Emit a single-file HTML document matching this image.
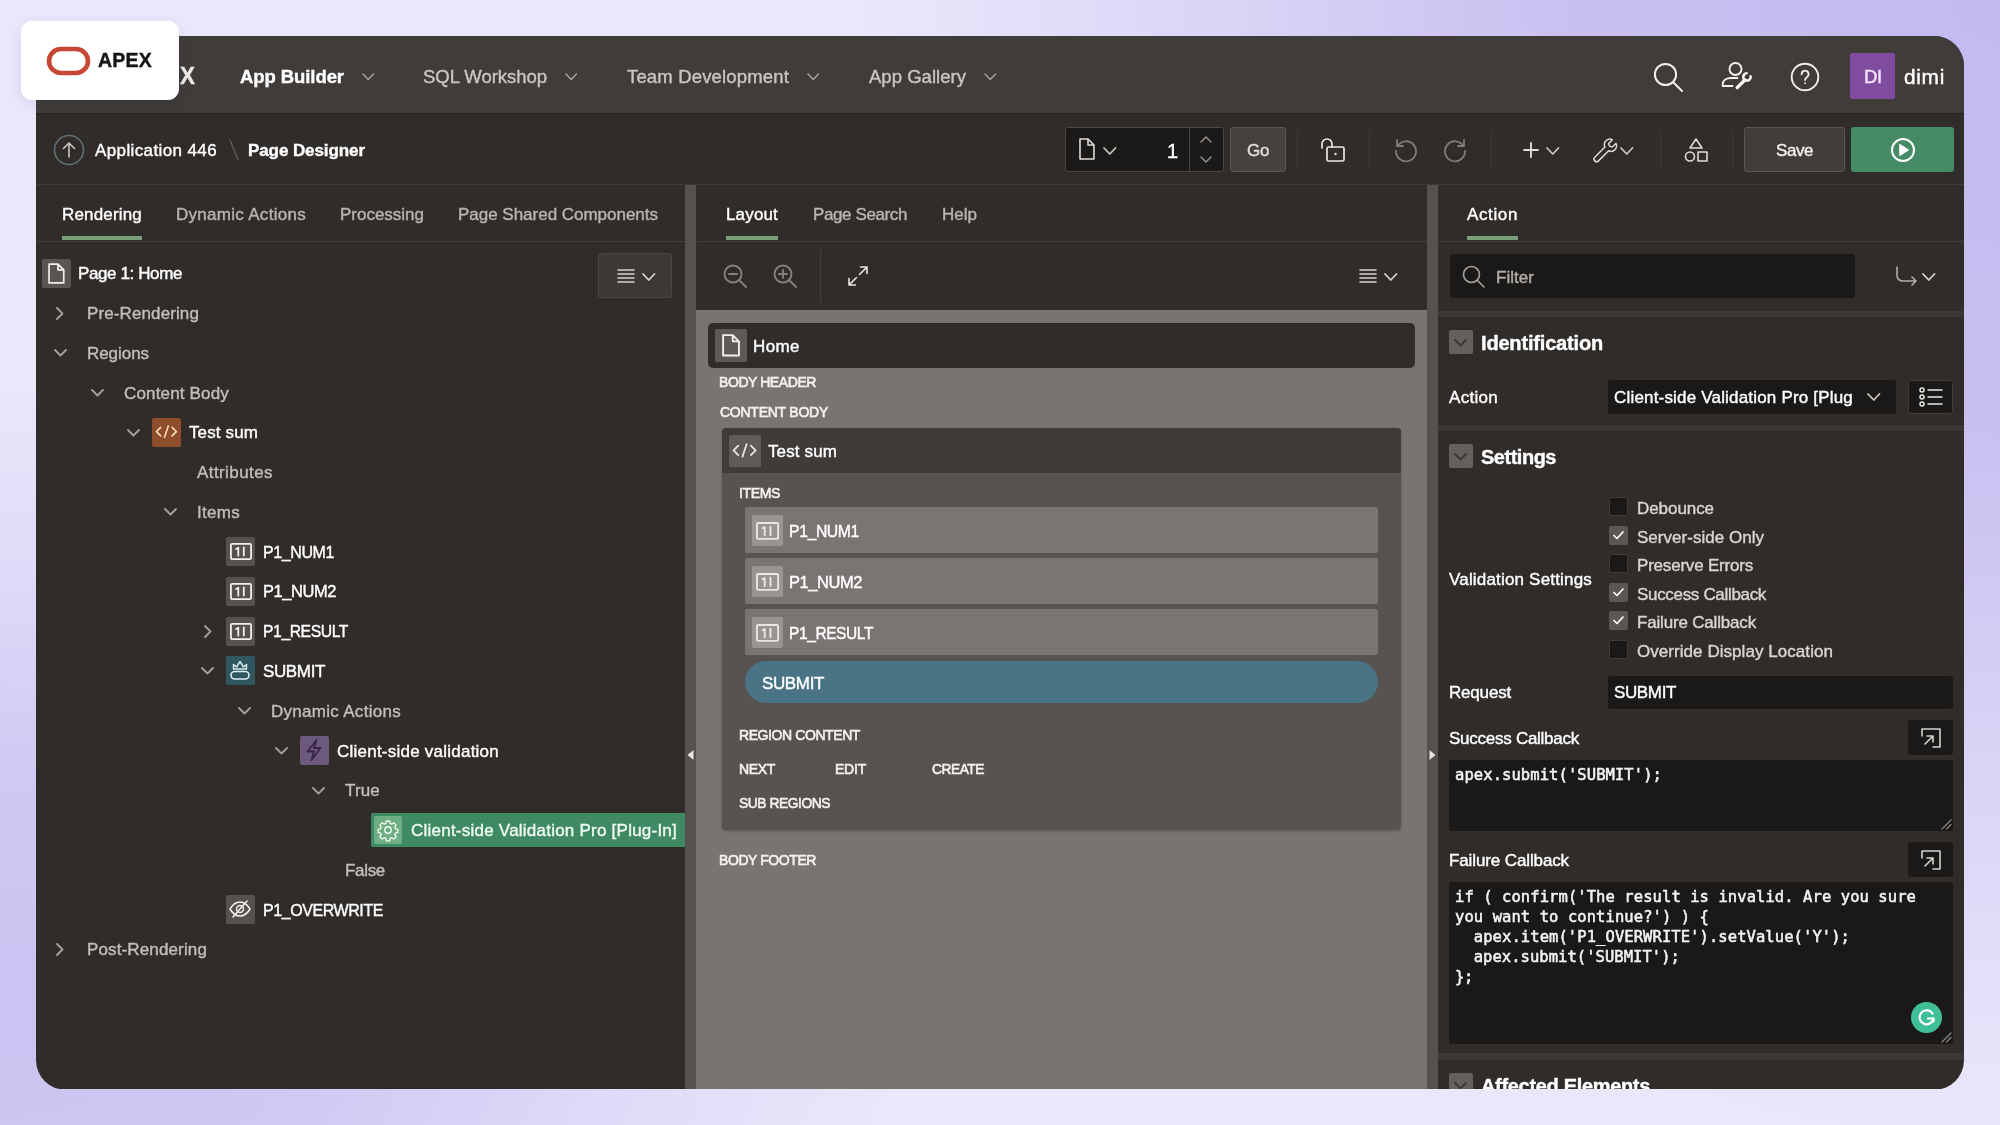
<!DOCTYPE html>
<html lang="en"><head><meta charset="utf-8"><title>APEX Page Designer</title>
<style>
html,body{margin:0;padding:0;}
body{width:2000px;height:1125px;overflow:hidden;background:#e9e5fa;}
#stage{position:relative;transform:translateZ(0);will-change:transform;font-family:"Liberation Sans",sans-serif;width:2000px;height:1125px;overflow:hidden;
 background:radial-gradient(ellipse 950px 650px at 0px 1000px,rgba(203,196,242,1) 0%,rgba(203,196,242,0.9) 30%,rgba(203,196,242,0.7) 45%,rgba(203,196,242,0.4) 63%,rgba(203,196,242,0) 95%),radial-gradient(circle 1150px at 2000px 0px,#c3baf0 0%,#c8bff0 36%,#d8d2f5 64%,#e7e3fa 92%,#eae7fb 100%);}
#stage div,#stage span,#stage svg{position:absolute;box-sizing:border-box;}
#stage span{white-space:pre;-webkit-text-stroke:0.4px currentColor;}
#stage svg{overflow:visible;fill:none;stroke-linecap:round;stroke-linejoin:round;}
#clip{left:0;top:0;width:2000px;height:1125px;clip-path:inset(36px 36px 36px 36px round 4px 24px 24px 24px);}

</style></head>
<body>
<div id="stage">
<div id="clip">
<div id="win" style="left:36px;top:36px;width:1928px;height:1054px;border-radius:4px 30px 30px 30px;overflow:hidden;background:#302c29;">
<div style="left:0px;top:0px;width:1928px;height:77px;background:#403c39;"></div>
<div style="left:0px;top:77px;width:1928px;height:1px;background:#262322;"></div>
<div style="left:0px;top:148px;width:1928px;height:1px;background:#3d3a38;"></div>
<div style="left:0px;top:205px;width:649px;height:1px;background:#403d3b;"></div>
<div style="left:661px;top:205px;width:730px;height:1px;background:#403d3b;"></div>
<div style="left:1402px;top:205px;width:526px;height:1px;background:#403d3b;"></div>
<div style="left:649px;top:149px;width:11.299999999999955px;height:905px;background:#56514d;"></div>
<div style="left:1391px;top:149px;width:11px;height:905px;background:#56514d;"></div>
<div style="left:660.3px;top:274px;width:730.7px;height:780px;background:#797470;"></div>
</div>
<svg style="left:362.75px;top:74.25px;" width="10.5" height="5.5" viewBox="0 0 10.5 5.5" stroke="#a29e9b" stroke-width="1.6"><path d="M0 0 L5.25 5.5 L10.5 0"/></svg>
<svg style="left:565.75px;top:74.25px;" width="10.5" height="5.5" viewBox="0 0 10.5 5.5" stroke="#a29e9b" stroke-width="1.6"><path d="M0 0 L5.25 5.5 L10.5 0"/></svg>
<svg style="left:807.75px;top:74.25px;" width="10.5" height="5.5" viewBox="0 0 10.5 5.5" stroke="#a29e9b" stroke-width="1.6"><path d="M0 0 L5.25 5.5 L10.5 0"/></svg>
<svg style="left:984.75px;top:74.25px;" width="10.5" height="5.5" viewBox="0 0 10.5 5.5" stroke="#a29e9b" stroke-width="1.6"><path d="M0 0 L5.25 5.5 L10.5 0"/></svg>
<svg style="left:1653px;top:62.5px;" width="32" height="32" viewBox="0 0 32 32" stroke="#f1efed" stroke-width="2"><circle cx="12.5" cy="11.5" r="10.6"/><path d="M20.2 19.2 L29 28"/></svg>
<svg style="left:1720px;top:61px;" width="32" height="32" viewBox="0 0 32 32" stroke="#f4f2f0" stroke-width="1.9"><circle cx="15.5" cy="8" r="6"/><path d="M2.7 25 v-1.5 c0-4.5 4.2-6.5 8.5-6.5 h6.3 M2.7 25 h9.8"/><path d="M17.2 26.6 L24.8 19" stroke-width="3.4"/><path d="M30.6 15.2 A3.7 3.7 0 1 1 26.6 12.2" stroke-width="2.6"/></svg>
<svg style="left:1789.5px;top:62px;" width="30" height="30" viewBox="0 0 30 30" stroke="#f1efed" stroke-width="1.9"><circle cx="15" cy="15" r="13.3"/><path d="M11.6 12.2 a3.5 3.5 0 1 1 5.3 3 c-1.3 0.9-1.8 1.4-1.8 2.9"/><circle cx="15.1" cy="21.2" r="0.9" fill="#f1efed" stroke="none"/></svg>
<div style="left:1850px;top:53px;width:45px;height:46px;background:#7f4c9f;border-radius:2px;"></div>
<svg style="left:53px;top:134px;" width="32" height="32" viewBox="0 0 32 32" stroke="#c9c6c3" stroke-width="1.6"><circle cx="16" cy="16" r="14.5" stroke="#5f6f72"/><path d="M16 23 V9 M10.5 14.5 L16 9 L21.5 14.5" stroke="#c9c6c3"/></svg>
<svg style="left:229px;top:139px;" width="10" height="22" viewBox="0 0 10 22" stroke="#5f5b59" stroke-width="1.4"><path d="M1 1 L9 21"/></svg>
<div style="left:1065px;top:127px;width:159px;height:45px;background:#1c1a19;border:1px solid #4a4644;border-radius:3px;"></div>
<div style="left:1189px;top:128px;width:1px;height:43px;background:#4a4644;"></div>
<svg style="left:1078px;top:138px;" width="18" height="22" viewBox="0 0 18 22" stroke="#dedbd8" stroke-width="1.6"><path d="M2 1 h8 l6 6 v14 h-14 z M10 1 v6 h6"/></svg>
<svg style="left:1104.25px;top:148.0px;" width="11.5" height="6" viewBox="0 0 11.5 6" stroke="#c9c5c1" stroke-width="1.8"><path d="M0 0 L5.75 6 L11.5 0"/></svg>
<svg style="left:1201px;top:137px;" width="10" height="5" viewBox="0 0 10 5" stroke="#8d8986" stroke-width="1.6"><path d="M0 5 L5 0 L10 5"/></svg>
<svg style="left:1201px;top:157px;" width="10" height="5" viewBox="0 0 10 5" stroke="#8d8986" stroke-width="1.6"><path d="M0 0 L5 5 L10 0"/></svg>
<div style="left:1230px;top:127px;width:56px;height:45px;background:#45413e;border:1px solid #5a5653;border-radius:3px;"></div>
<div style="left:1297px;top:129px;width:1px;height:42px;background:#3b3836;"></div>
<div style="left:1369px;top:129px;width:1px;height:42px;background:#3b3836;"></div>
<div style="left:1491px;top:129px;width:1px;height:42px;background:#3b3836;"></div>
<div style="left:1660px;top:129px;width:1px;height:42px;background:#3b3836;"></div>
<div style="left:1732px;top:129px;width:1px;height:42px;background:#3b3836;"></div>
<svg style="left:1319px;top:136px;" width="28" height="28" viewBox="0 0 28 28" stroke="#e8e6e3" stroke-width="1.7"><rect x="8" y="11" width="17" height="14" rx="1.5"/><path d="M3 12 V8 a5 5 0 0 1 10 0 v3"/><circle cx="16.5" cy="18" r="1.2" fill="#e8e6e3" stroke="none"/></svg>
<svg style="left:1392.5px;top:134.5px;" width="26" height="26" viewBox="0 0 26 26" stroke="#807c79" stroke-width="1.8"><path d="M4 5 v6 h6"/><path d="M4.5 11 A10 10 0 1 1 3 16"/></svg>
<svg style="left:1442px;top:134.5px;" width="26" height="26" viewBox="0 0 26 26" stroke="#807c79" stroke-width="1.8"><path d="M22 5 v6 h-6"/><path d="M21.5 11 A10 10 0 1 0 23 16"/></svg>
<svg style="left:1523.5px;top:143px;" width="14" height="14" viewBox="0 0 14 14" stroke="#dedbd8" stroke-width="1.9"><path d="M7 0 V14 M0 7 H14"/></svg>
<svg style="left:1547.25px;top:148.0px;" width="11.5" height="6" viewBox="0 0 11.5 6" stroke="#c9c5c1" stroke-width="1.8"><path d="M0 0 L5.75 6 L11.5 0"/></svg>
<svg style="left:1591px;top:134.5px;transform:scale(0.92);" width="26" height="26" viewBox="0 0 26 26" stroke="#dedbd8" stroke-width="1.6"><path d="M3 23 l11-11 a6 6 0 0 1 8-8 l-4 4 1 3 3 1 4-4 a6 6 0 0 1-8 8 l-11 11 a2.3 2.3 0 0 1-4-4 z"/></svg>
<svg style="left:1621.25px;top:148.0px;" width="11.5" height="6" viewBox="0 0 11.5 6" stroke="#c9c5c1" stroke-width="1.8"><path d="M0 0 L5.75 6 L11.5 0"/></svg>
<svg style="left:1683px;top:137px;" width="26" height="26" viewBox="0 0 26 26" stroke="#dedbd8" stroke-width="1.6"><path d="M13 2 L19 11 H7 Z"/><circle cx="7" cy="19.5" r="4.5"/><rect x="15" y="15" width="9" height="9"/></svg>
<div style="left:1744px;top:127px;width:101px;height:45px;background:#413d3b;border:1px solid #5a5653;border-radius:3px;"></div>
<div style="left:1851px;top:127px;width:103px;height:45px;background:#458b66;border-radius:3px;"></div>
<svg style="left:1890px;top:137px;" width="26" height="26" viewBox="0 0 26 26" stroke="#ffffff" stroke-width="2"><circle cx="13" cy="13" r="11"/><path d="M10 7.5 L18.5 13 L10 18.5 Z" fill="#fff" stroke-width="1"/></svg>
<div style="left:62px;top:235.8px;width:80px;height:4.699999999999989px;background:#789e7a;"></div>
<div style="left:726px;top:235.8px;width:52px;height:4.699999999999989px;background:#789e7a;"></div>
<div style="left:1467px;top:235.8px;width:51px;height:4.699999999999989px;background:#789e7a;"></div>
<div style="left:42px;top:258.5px;width:29px;height:29.0px;background:#595552;border-radius:2px;"></div>
<svg style="left:48.1px;top:262.5px;" width="16.8" height="21.0" viewBox="0 0 16 20" stroke="#f1efed" stroke-width="1.6"><path d="M1 1 h8.5 l5.5 5.5 v12.5 h-14 z M9.5 1 v5.5 h5.5"/></svg>
<div style="left:598px;top:253px;width:74px;height:45px;background:#3b3836;border:1px solid #4a4644;border-radius:3px;"></div>
<svg style="left:618px;top:269px;" width="16" height="14" viewBox="0 0 16 14" stroke="#d5d2cf" stroke-width="1.5"><path d="M0 1 H16 M0 5 H16 M0 9 H16 M0 13 H16"/></svg>
<svg style="left:643.25px;top:274.0px;" width="11.5" height="6" viewBox="0 0 11.5 6" stroke="#d5d2cf" stroke-width="1.8"><path d="M0 0 L5.75 6 L11.5 0"/></svg>
<svg style="left:57.25px;top:307.5px;" width="5.5" height="11" viewBox="0 0 5.5 11" stroke="#a39f9b" stroke-width="1.9"><path d="M0 0 L5.5 5.5 L0 11"/></svg>
<svg style="left:54.5px;top:350.25px;" width="11" height="5.5" viewBox="0 0 11 5.5" stroke="#a39f9b" stroke-width="1.9"><path d="M0 0 L5.5 5.5 L11 0"/></svg>
<svg style="left:91.5px;top:390.25px;" width="11" height="5.5" viewBox="0 0 11 5.5" stroke="#a39f9b" stroke-width="1.9"><path d="M0 0 L5.5 5.5 L11 0"/></svg>
<svg style="left:127.5px;top:430.25px;" width="11" height="5.5" viewBox="0 0 11 5.5" stroke="#a39f9b" stroke-width="1.9"><path d="M0 0 L5.5 5.5 L11 0"/></svg>
<div style="left:152px;top:417.5px;width:29px;height:29.0px;background:#8e4d2b;border-radius:2px;"></div>
<svg style="left:155.1px;top:425.35px;" width="22.799999999999997" height="13.299999999999999" viewBox="0 0 24 14" stroke="#ffd9bf" stroke-width="1.7"><path d="M6 2.5 L1.5 7 L6 11.5 M18 2.5 L22.5 7 L18 11.5 M14 1 L10 13"/></svg>
<svg style="left:164.5px;top:509.25px;" width="11" height="5.5" viewBox="0 0 11 5.5" stroke="#a39f9b" stroke-width="1.9"><path d="M0 0 L5.5 5.5 L11 0"/></svg>
<div style="left:226px;top:536.5px;width:29px;height:29.0px;background:#55514e;border-radius:2px;"></div>
<svg style="left:229.5px;top:542.5px;" width="22.0" height="17.0" viewBox="0 0 22 17" stroke="#f1efed" stroke-width="1.8"><rect x="0.9" y="0.9" width="20.2" height="15.2" rx="1.3"/><path d="M6.3 6 l2-1.3 v8 M13.8 4.5 v8" stroke-width="1.8"/></svg>
<div style="left:226px;top:576.5px;width:29px;height:29.0px;background:#55514e;border-radius:2px;"></div>
<svg style="left:229.5px;top:582.5px;" width="22.0" height="17.0" viewBox="0 0 22 17" stroke="#f1efed" stroke-width="1.8"><rect x="0.9" y="0.9" width="20.2" height="15.2" rx="1.3"/><path d="M6.3 6 l2-1.3 v8 M13.8 4.5 v8" stroke-width="1.8"/></svg>
<svg style="left:205.25px;top:625.5px;" width="5.5" height="11" viewBox="0 0 5.5 11" stroke="#a39f9b" stroke-width="1.9"><path d="M0 0 L5.5 5.5 L0 11"/></svg>
<div style="left:226px;top:616.5px;width:29px;height:29.0px;background:#55514e;border-radius:2px;"></div>
<svg style="left:229.5px;top:622.5px;" width="22.0" height="17.0" viewBox="0 0 22 17" stroke="#f1efed" stroke-width="1.8"><rect x="0.9" y="0.9" width="20.2" height="15.2" rx="1.3"/><path d="M6.3 6 l2-1.3 v8 M13.8 4.5 v8" stroke-width="1.8"/></svg>
<svg style="left:201.5px;top:668.25px;" width="11" height="5.5" viewBox="0 0 11 5.5" stroke="#a39f9b" stroke-width="1.9"><path d="M0 0 L5.5 5.5 L11 0"/></svg>
<div style="left:226px;top:655.5px;width:29px;height:29.0px;background:#30565f;border-radius:2px;"></div>
<svg style="left:230px;top:659px;" width="20" height="22" viewBox="0 0 20 22" stroke="#d9eef3" stroke-width="1.6"><rect x="1" y="12.5" width="18" height="7.5" rx="3.75"/><path d="M3.5 10 V5.5 l3 2.5 l3.5-5.5 l3.5 5.5 l3-2.5 V10 Z" stroke-width="1.4"/></svg>
<svg style="left:238.5px;top:708.25px;" width="11" height="5.5" viewBox="0 0 11 5.5" stroke="#a39f9b" stroke-width="1.9"><path d="M0 0 L5.5 5.5 L11 0"/></svg>
<svg style="left:275.5px;top:748.25px;" width="11" height="5.5" viewBox="0 0 11 5.5" stroke="#a39f9b" stroke-width="1.9"><path d="M0 0 L5.5 5.5 L11 0"/></svg>
<div style="left:300px;top:735.5px;width:29px;height:29.0px;background:#6c5a7d;border-radius:2px;"></div>
<svg style="left:306px;top:739px;" width="16" height="22" viewBox="0 0 16 22" stroke="#3a264d" stroke-width="1.9"><path d="M10.5 1 L1.5 12.5 H8 L5.5 21 L14.5 9 H8 Z"/></svg>
<svg style="left:312.5px;top:788.25px;" width="11" height="5.5" viewBox="0 0 11 5.5" stroke="#a39f9b" stroke-width="1.9"><path d="M0 0 L5.5 5.5 L11 0"/></svg>
<div style="left:371px;top:813px;width:314px;height:34px;background:#3f8a62;border-radius:2px 0 0 2px;"></div>
<div style="left:374px;top:816px;width:28px;height:28px;background:#6fae83;border-radius:2px;"></div>
<svg style="left:378px;top:820px;" width="20" height="20" viewBox="0 0 20 20" stroke="#f3fbf5" stroke-width="1.4"><circle cx="10" cy="10" r="3.2"/><path d="M8.4 1 h3.2 l.5 2.4 l1.7 .7 l2-1.3 l2.3 2.3 l-1.3 2 l.7 1.7 l2.4 .5 v3.2 l-2.4 .5 l-.7 1.7 l1.3 2 l-2.3 2.3 l-2-1.3 l-1.7 .7 l-.5 2.4 h-3.2 l-.5-2.4 l-1.7-.7 l-2 1.3 l-2.3-2.3 l1.3-2 l-.7-1.7 l-2.4-.5 v-3.2 l2.4-.5 l.7-1.7 l-1.3-2 l2.3-2.3 l2 1.3 l1.7-.7 z" stroke-width="1.3"/></svg>
<div style="left:226px;top:894.5px;width:29px;height:29.0px;background:#55514e;border-radius:2px;"></div>
<svg style="left:229px;top:900px;" width="22" height="18" viewBox="0 0 22 18" stroke="#f1efed" stroke-width="1.5"><path d="M1 9 C4 4 8 2 11 2 C14 2 18 4 21 9 C18 14 14 16 11 16 C8 16 4 14 1 9 Z"/><circle cx="11" cy="9" r="3.4"/><path d="M4 17 L18 1"/></svg>
<svg style="left:57.25px;top:943.5px;" width="5.5" height="11" viewBox="0 0 5.5 11" stroke="#a39f9b" stroke-width="1.9"><path d="M0 0 L5.5 5.5 L0 11"/></svg>
<svg style="left:687px;top:750px" width="7" height="10" viewBox="0 0 7 10"><path d="M6.5 0 L0.5 5 L6.5 10 Z" fill="#e5e2df"/></svg>
<svg style="left:1429px;top:750px" width="7" height="10" viewBox="0 0 7 10"><path d="M0.5 0 L6.5 5 L0.5 10 Z" fill="#e5e2df"/></svg>
<svg style="left:723px;top:264px;" width="24" height="24" viewBox="0 0 24 24" stroke="#85817d" stroke-width="1.9"><circle cx="10" cy="10" r="8.5"/><path d="M16.2 16.2 L23 23"/><path d="M6 10 H14"/></svg>
<svg style="left:773px;top:264px;" width="24" height="24" viewBox="0 0 24 24" stroke="#85817d" stroke-width="1.9"><circle cx="10" cy="10" r="8.5"/><path d="M16.2 16.2 L23 23"/><path d="M6 10 H14"/><path d="M10 6 V14"/></svg>
<div style="left:820px;top:249px;width:1px;height:54px;background:#3f3c3a;"></div>
<svg style="left:848px;top:266px;" width="20" height="20" viewBox="0 0 20 20" stroke="#e8e6e3" stroke-width="1.6"><path d="M12.5 1 H19 V7.5 M19 1 L11.5 8.5 M7.5 19 H1 V12.5 M1 19 L8.5 11.5"/></svg>
<svg style="left:1360px;top:269px;" width="16" height="14" viewBox="0 0 16 14" stroke="#d5d2cf" stroke-width="1.5"><path d="M0 1 H16 M0 5 H16 M0 9 H16 M0 13 H16"/></svg>
<svg style="left:1385.25px;top:274.0px;" width="11.5" height="6" viewBox="0 0 11.5 6" stroke="#d5d2cf" stroke-width="1.8"><path d="M0 0 L5.75 6 L11.5 0"/></svg>
<div style="left:708px;top:323px;width:707px;height:45px;background:#2f2c2a;border-radius:5px;"></div>
<div style="left:714.5px;top:329.05px;width:32.5px;height:32.5px;background:#5e5a57;border-radius:2px;"></div>
<svg style="left:721.71px;top:334.0px;" width="18.08" height="22.599999999999998" viewBox="0 0 16 20" stroke="#f1efed" stroke-width="1.7"><path d="M1 1 h8.5 l5.5 5.5 v12.5 h-14 z M9.5 1 v5.5 h5.5"/></svg>
<div style="left:722px;top:428px;width:679px;height:402px;background:#575350;border-radius:4px;box-shadow:0 1px 3px rgba(0,0,0,0.25);"></div>
<div style="left:722px;top:428px;width:679px;height:45px;background:#3f3b38;border-radius:4px 4px 0 0;"></div>
<div style="left:729px;top:434.7px;width:32px;height:32.0px;background:#5f5b58;border-radius:2px;"></div>
<svg style="left:732.4px;top:443.34999999999997px;" width="25.200000000000003" height="14.700000000000001" viewBox="0 0 24 14" stroke="#e8e6e3" stroke-width="1.7"><path d="M6 2.5 L1.5 7 L6 11.5 M18 2.5 L22.5 7 L18 11.5 M14 1 L10 13"/></svg>
<div style="left:745px;top:507px;width:633px;height:46px;background:#7a7572;border-radius:2px;"></div>
<div style="left:751.6px;top:514.8000000000001px;width:31.600000000000023px;height:31.59999999999991px;background:#99948f;border-radius:2px;"></div>
<svg style="left:755.85px;top:521.6750000000001px;" width="23.1" height="17.85" viewBox="0 0 22 17" stroke="#e9e6e3" stroke-width="1.8"><rect x="0.9" y="0.9" width="20.2" height="15.2" rx="1.3"/><path d="M6.3 6 l2-1.3 v8 M13.8 4.5 v8" stroke-width="1.8"/></svg>
<div style="left:745px;top:558px;width:633px;height:46px;background:#7a7572;border-radius:2px;"></div>
<div style="left:751.6px;top:565.8000000000001px;width:31.600000000000023px;height:31.59999999999991px;background:#99948f;border-radius:2px;"></div>
<svg style="left:755.85px;top:572.6750000000001px;" width="23.1" height="17.85" viewBox="0 0 22 17" stroke="#e9e6e3" stroke-width="1.8"><rect x="0.9" y="0.9" width="20.2" height="15.2" rx="1.3"/><path d="M6.3 6 l2-1.3 v8 M13.8 4.5 v8" stroke-width="1.8"/></svg>
<div style="left:745px;top:609px;width:633px;height:46px;background:#7a7572;border-radius:2px;"></div>
<div style="left:751.6px;top:616.8000000000001px;width:31.600000000000023px;height:31.59999999999991px;background:#99948f;border-radius:2px;"></div>
<svg style="left:755.85px;top:623.6750000000001px;" width="23.1" height="17.85" viewBox="0 0 22 17" stroke="#e9e6e3" stroke-width="1.8"><rect x="0.9" y="0.9" width="20.2" height="15.2" rx="1.3"/><path d="M6.3 6 l2-1.3 v8 M13.8 4.5 v8" stroke-width="1.8"/></svg>
<div style="left:745px;top:661px;width:633px;height:42px;background:#4a7486;border-radius:21px;"></div>
<div style="left:1450px;top:254px;width:405px;height:44px;background:#1b1918;border-radius:3px;"></div>
<svg style="left:1462px;top:265px;" width="24" height="24" viewBox="0 0 24 24" stroke="#a7a39f" stroke-width="1.6"><circle cx="9.5" cy="9.5" r="8"/><path d="M15.5 15.5 L22 22"/></svg>
<svg style="left:1896px;top:266px;" width="22" height="21" viewBox="0 0 22 21" stroke="#b3afab" stroke-width="1.6"><path d="M1 1 V9.5 a5.5 5.5 0 0 0 5.5 5.5 H20 M16 11 L20 15 L16 19"/></svg>
<svg style="left:1923.25px;top:274.0px;" width="11.5" height="6" viewBox="0 0 11.5 6" stroke="#d5d2cf" stroke-width="1.8"><path d="M0 0 L5.75 6 L11.5 0"/></svg>
<div style="left:1438px;top:311px;width:526px;height:6px;background:#3a3735;"></div>
<div style="left:1438px;top:425px;width:526px;height:6px;background:#3a3735;"></div>
<div style="left:1438px;top:1053px;width:526px;height:7px;background:#3a3735;"></div>
<div style="left:1449px;top:330.4px;width:23.5px;height:23.600000000000023px;background:#64605c;border-radius:2px;"></div>
<svg style="left:1455.2px;top:340.45px;" width="11" height="5.5" viewBox="0 0 11 5.5" stroke="#3b3734" stroke-width="1.8"><path d="M0 0 L5.5 5.5 L11 0"/></svg>
<div style="left:1608px;top:380px;width:288px;height:34px;background:#1b1918;border-radius:3px;"></div>
<svg style="left:1868.25px;top:394.0px;" width="11.5" height="6" viewBox="0 0 11.5 6" stroke="#c9c5c1" stroke-width="1.8"><path d="M0 0 L5.75 6 L11.5 0"/></svg>
<div style="left:1908px;top:380px;width:45px;height:34px;background:#1b1918;border:1px solid #3e3b39;border-radius:3px;"></div>
<svg style="left:1919px;top:387px;" width="24" height="20" viewBox="0 0 24 20" stroke="#e8e6e3" stroke-width="1.5"><circle cx="3" cy="3" r="2"/><circle cx="3" cy="10" r="2"/><circle cx="3" cy="17" r="2"/><path d="M9 3 H23 M9 10 H23 M9 17 H23"/></svg>
<div style="left:1449px;top:444.4px;width:23.5px;height:23.600000000000023px;background:#64605c;border-radius:2px;"></div>
<svg style="left:1455.2px;top:454.45px;" width="11" height="5.5" viewBox="0 0 11 5.5" stroke="#3b3734" stroke-width="1.8"><path d="M0 0 L5.5 5.5 L11 0"/></svg>
<div style="left:1609px;top:497px;width:19px;height:19px;background:#1b1918;border:1px solid #3e3b39;border-radius:2px;"></div>
<div style="left:1609px;top:526px;width:19px;height:19px;background:#5b5754;border-radius:2px;"></div>
<svg style="left:1613px;top:531px;" width="11" height="9" viewBox="0 0 11 9" stroke="#ffffff" stroke-width="1.7"><path d="M1 4.5 L4 7.5 L10 1"/></svg>
<div style="left:1609px;top:554px;width:19px;height:19px;background:#1b1918;border:1px solid #3e3b39;border-radius:2px;"></div>
<div style="left:1609px;top:583px;width:19px;height:19px;background:#5b5754;border-radius:2px;"></div>
<svg style="left:1613px;top:588px;" width="11" height="9" viewBox="0 0 11 9" stroke="#ffffff" stroke-width="1.7"><path d="M1 4.5 L4 7.5 L10 1"/></svg>
<div style="left:1609px;top:611px;width:19px;height:19px;background:#5b5754;border-radius:2px;"></div>
<svg style="left:1613px;top:616px;" width="11" height="9" viewBox="0 0 11 9" stroke="#ffffff" stroke-width="1.7"><path d="M1 4.5 L4 7.5 L10 1"/></svg>
<div style="left:1609px;top:640px;width:19px;height:19px;background:#1b1918;border:1px solid #3e3b39;border-radius:2px;"></div>
<div style="left:1608px;top:676px;width:345px;height:33px;background:#1b1918;border-radius:3px;"></div>
<div style="left:1908px;top:720px;width:45px;height:35px;background:#1b1918;border-radius:3px;"></div>
<svg style="left:1921px;top:728px;" width="20" height="20" viewBox="0 0 20 20" stroke="#d5d2cf" stroke-width="1.6"><path d="M1 8 V1 H19 V19 H12"/><path d="M4 16 L12 8 M6 8 H12 V14" /></svg>
<div style="left:1449px;top:760px;width:504px;height:71px;background:#1b1918;border-radius:3px;"></div>
<div style="left:1908px;top:842px;width:45px;height:35px;background:#1b1918;border-radius:3px;"></div>
<svg style="left:1921px;top:850px;" width="20" height="20" viewBox="0 0 20 20" stroke="#d5d2cf" stroke-width="1.6"><path d="M1 8 V1 H19 V19 H12"/><path d="M4 16 L12 8 M6 8 H12 V14" /></svg>
<div style="left:1449px;top:882px;width:504px;height:162px;background:#1b1918;border-radius:3px;"></div>
<svg style="left:1941px;top:819px;" width="10" height="10" viewBox="0 0 10 10" stroke="#8a8683" stroke-width="1.2"><path d="M1 10 L10 1 M5.5 10 L10 5.5"/></svg>
<svg style="left:1941px;top:1032px;" width="10" height="10" viewBox="0 0 10 10" stroke="#8a8683" stroke-width="1.2"><path d="M1 10 L10 1 M5.5 10 L10 5.5"/></svg>
<div style="left:1911px;top:1002px;width:31px;height:31px;border-radius:50%;background:#3fbf98;"></div>
<svg style="left:1917px;top:1008px;" width="18.5" height="19" viewBox="0 0 18.5 19" stroke="#ffffff" stroke-width="2.2"><path d="M15.5 5.5 A7 7 0 1 0 16.5 10.5 H11"/><path d="M16.5 10.5 V13.5" /></svg>
<div style="left:1449px;top:1073.4px;width:23.5px;height:23.59999999999991px;background:#64605c;border-radius:2px;"></div>
<svg style="left:1455.2px;top:1083.45px;" width="11" height="5.5" viewBox="0 0 11 5.5" stroke="#3b3734" stroke-width="1.8"><path d="M0 0 L5.5 5.5 L11 0"/></svg>
<span style="left:180px;top:62.7px;font-size:23px;line-height:27.6px;font-weight:700;color:#ebe9e6;letter-spacing:-0.450px;transform:scaleX(0.9736);transform-origin:0 50%;">X</span>
<span style="left:240px;top:66.1px;font-size:18.5px;line-height:22.2px;font-weight:700;color:#ffffff;letter-spacing:-0.077px;">App Builder</span>
<span style="left:423px;top:66.1px;font-size:18.5px;line-height:22.2px;font-weight:400;color:#c9c5c1;letter-spacing:-0.035px;">SQL Workshop</span>
<span style="left:627px;top:66.1px;font-size:18.5px;line-height:22.2px;font-weight:400;color:#c9c5c1;letter-spacing:0.163px;">Team Development</span>
<span style="left:869px;top:66.1px;font-size:18.5px;line-height:22.2px;font-weight:400;color:#c9c5c1;letter-spacing:0.031px;">App Gallery</span>
<span style="left:1864px;top:66.1px;font-size:18.5px;line-height:22.2px;font-weight:400;color:#f6e6fb;letter-spacing:-0.250px;">DI</span>
<span style="left:1904px;top:65.3px;font-size:20px;line-height:24.0px;font-weight:400;color:#ffffff;letter-spacing:0.700px;transform:scaleX(1.0387);transform-origin:0 50%;">dimi</span>
<span style="left:95px;top:140.9px;font-size:17px;line-height:20.4px;font-weight:400;color:#ffffff;letter-spacing:0.382px;">Application 446</span>
<span style="left:248px;top:140.9px;font-size:17px;line-height:20.4px;font-weight:700;color:#ffffff;letter-spacing:-0.085px;">Page Designer</span>
<span style="left:1167px;top:139.3px;font-size:20px;line-height:24.0px;font-weight:400;color:#ffffff;letter-spacing:-0.125px;">1</span>
<span style="left:1247px;top:140.9px;font-size:17px;line-height:20.4px;font-weight:400;color:#e2dfdc;letter-spacing:-0.344px;">Go</span>
<span style="left:1776px;top:140.9px;font-size:17px;line-height:20.4px;font-weight:400;color:#f1efed;letter-spacing:-0.438px;">Save</span>
<span style="left:62px;top:204.9px;font-size:17px;line-height:20.4px;font-weight:400;color:#ffffff;letter-spacing:0.172px;">Rendering</span>
<span style="left:176px;top:204.9px;font-size:17px;line-height:20.4px;font-weight:400;color:#b8b4b0;letter-spacing:0.289px;">Dynamic Actions</span>
<span style="left:340px;top:204.9px;font-size:17px;line-height:20.4px;font-weight:400;color:#b8b4b0;letter-spacing:-0.011px;">Processing</span>
<span style="left:458px;top:204.9px;font-size:17px;line-height:20.4px;font-weight:400;color:#b8b4b0;letter-spacing:-0.016px;">Page Shared Components</span>
<span style="left:726px;top:204.9px;font-size:17px;line-height:20.4px;font-weight:400;color:#ffffff;letter-spacing:0.159px;">Layout</span>
<span style="left:813px;top:204.9px;font-size:17px;line-height:20.4px;font-weight:400;color:#b8b4b0;letter-spacing:-0.391px;">Page Search</span>
<span style="left:942px;top:204.9px;font-size:17px;line-height:20.4px;font-weight:400;color:#b8b4b0;letter-spacing:0.008px;">Help</span>
<span style="left:1467px;top:204.9px;font-size:17px;line-height:20.4px;font-weight:400;color:#ffffff;letter-spacing:0.625px;">Action</span>
<span style="left:78px;top:263.9px;font-size:17px;line-height:20.4px;font-weight:400;color:#ffffff;letter-spacing:-0.391px;">Page 1: Home</span>
<span style="left:87px;top:303.9px;font-size:17px;line-height:20.4px;font-weight:400;color:#c2beba;letter-spacing:0.111px;">Pre-Rendering</span>
<span style="left:87px;top:343.9px;font-size:17px;line-height:20.4px;font-weight:400;color:#c2beba;letter-spacing:-0.054px;">Regions</span>
<span style="left:124px;top:383.9px;font-size:17px;line-height:20.4px;font-weight:400;color:#c2beba;letter-spacing:0.165px;">Content Body</span>
<span style="left:189px;top:422.9px;font-size:17px;line-height:20.4px;font-weight:400;color:#ffffff;letter-spacing:0.121px;">Test sum</span>
<span style="left:197px;top:462.9px;font-size:17px;line-height:20.4px;font-weight:400;color:#c2beba;letter-spacing:0.419px;">Attributes</span>
<span style="left:197px;top:502.9px;font-size:17px;line-height:20.4px;font-weight:400;color:#c2beba;letter-spacing:0.287px;">Items</span>
<span style="left:263px;top:542.9px;font-size:17px;line-height:20.4px;font-weight:400;color:#ffffff;letter-spacing:-0.450px;transform:scaleX(0.9432);transform-origin:0 50%;">P1_NUM1</span>
<span style="left:263px;top:581.9px;font-size:17px;line-height:20.4px;font-weight:400;color:#ffffff;letter-spacing:-0.450px;transform:scaleX(0.9698);transform-origin:0 50%;">P1_NUM2</span>
<span style="left:263px;top:621.9px;font-size:17px;line-height:20.4px;font-weight:400;color:#ffffff;letter-spacing:-0.450px;transform:scaleX(0.9238);transform-origin:0 50%;">P1_RESULT</span>
<span style="left:263px;top:661.9px;font-size:17px;line-height:20.4px;font-weight:400;color:#ffffff;letter-spacing:-0.372px;">SUBMIT</span>
<span style="left:271px;top:701.9px;font-size:17px;line-height:20.4px;font-weight:400;color:#c2beba;letter-spacing:0.289px;">Dynamic Actions</span>
<span style="left:337px;top:741.9px;font-size:17px;line-height:20.4px;font-weight:400;color:#ffffff;letter-spacing:0.233px;">Client-side validation</span>
<span style="left:345px;top:780.9px;font-size:17px;line-height:20.4px;font-weight:400;color:#c2beba;letter-spacing:0.168px;">True</span>
<span style="left:411px;top:820.9px;font-size:17px;line-height:20.4px;font-weight:400;color:#effbf2;letter-spacing:0.232px;">Client-side Validation Pro [Plug-In]</span>
<span style="left:345px;top:860.9px;font-size:17px;line-height:20.4px;font-weight:400;color:#c2beba;letter-spacing:-0.316px;">False</span>
<span style="left:263px;top:900.9px;font-size:17px;line-height:20.4px;font-weight:400;color:#ffffff;letter-spacing:-0.450px;transform:scaleX(0.9412);transform-origin:0 50%;">P1_OVERWRITE</span>
<span style="left:87px;top:939.9px;font-size:17px;line-height:20.4px;font-weight:400;color:#c2beba;letter-spacing:0.134px;">Post-Rendering</span>
<span style="left:753px;top:336.9px;font-size:17px;line-height:20.4px;font-weight:400;color:#ffffff;letter-spacing:0.410px;">Home</span>
<span style="left:719px;top:373.5px;font-size:14px;line-height:16.8px;font-weight:400;color:#f3f1ef;letter-spacing:-0.425px;-webkit-text-stroke:0.6px currentColor;">BODY HEADER</span>
<span style="left:720px;top:403.5px;font-size:14px;line-height:16.8px;font-weight:400;color:#f3f1ef;letter-spacing:-0.249px;-webkit-text-stroke:0.6px currentColor;">CONTENT BODY</span>
<span style="left:768px;top:441.9px;font-size:17px;line-height:20.4px;font-weight:400;color:#ffffff;letter-spacing:0.121px;">Test sum</span>
<span style="left:739px;top:484.5px;font-size:14px;line-height:16.8px;font-weight:400;color:#f3f1ef;letter-spacing:-0.356px;-webkit-text-stroke:0.6px currentColor;">ITEMS</span>
<span style="left:789px;top:521.9px;font-size:17px;line-height:20.4px;font-weight:400;color:#ffffff;letter-spacing:-0.450px;transform:scaleX(0.9300);transform-origin:0 50%;">P1_NUM1</span>
<span style="left:789px;top:572.9px;font-size:17px;line-height:20.4px;font-weight:400;color:#ffffff;letter-spacing:-0.450px;transform:scaleX(0.9698);transform-origin:0 50%;">P1_NUM2</span>
<span style="left:789px;top:623.9px;font-size:17px;line-height:20.4px;font-weight:400;color:#ffffff;letter-spacing:-0.450px;transform:scaleX(0.9129);transform-origin:0 50%;">P1_RESULT</span>
<span style="left:762px;top:673.9px;font-size:17px;line-height:20.4px;font-weight:400;color:#ffffff;letter-spacing:-0.372px;">SUBMIT</span>
<span style="left:739px;top:726.5px;font-size:14px;line-height:16.8px;font-weight:400;color:#f3f1ef;letter-spacing:-0.413px;-webkit-text-stroke:0.6px currentColor;">REGION CONTENT</span>
<span style="left:739px;top:760.5px;font-size:14px;line-height:16.8px;font-weight:400;color:#f3f1ef;letter-spacing:-0.336px;-webkit-text-stroke:0.6px currentColor;">NEXT</span>
<span style="left:835px;top:760.5px;font-size:14px;line-height:16.8px;font-weight:400;color:#f3f1ef;letter-spacing:-0.223px;-webkit-text-stroke:0.6px currentColor;">EDIT</span>
<span style="left:932px;top:760.5px;font-size:14px;line-height:16.8px;font-weight:400;color:#f3f1ef;letter-spacing:-0.450px;transform:scaleX(0.9802);transform-origin:0 50%;-webkit-text-stroke:0.6px currentColor;">CREATE</span>
<span style="left:739px;top:794.5px;font-size:14px;line-height:16.8px;font-weight:400;color:#f3f1ef;letter-spacing:-0.450px;transform:scaleX(0.9859);transform-origin:0 50%;-webkit-text-stroke:0.6px currentColor;">SUB REGIONS</span>
<span style="left:719px;top:851.5px;font-size:14px;line-height:16.8px;font-weight:400;color:#f3f1ef;letter-spacing:-0.423px;-webkit-text-stroke:0.6px currentColor;">BODY FOOTER</span>
<span style="left:1496px;top:267.9px;font-size:17px;line-height:20.4px;font-weight:400;color:#b3afab;letter-spacing:0.036px;">Filter</span>
<span style="left:1481px;top:331.3px;font-size:20px;line-height:24.0px;font-weight:700;color:#ffffff;letter-spacing:-0.175px;">Identification</span>
<span style="left:1449px;top:387.9px;font-size:17px;line-height:20.4px;font-weight:400;color:#ffffff;letter-spacing:0.292px;">Action</span>
<span style="left:1614px;top:387.9px;font-size:17px;line-height:20.4px;font-weight:400;color:#ffffff;letter-spacing:0.185px;">Client-side Validation Pro [Plug</span>
<span style="left:1481px;top:445.3px;font-size:20px;line-height:24.0px;font-weight:700;color:#ffffff;letter-spacing:-0.450px;transform:scaleX(0.9959);transform-origin:0 50%;">Settings</span>
<span style="left:1449px;top:569.9px;font-size:17px;line-height:20.4px;font-weight:400;color:#ffffff;letter-spacing:0.181px;">Validation Settings</span>
<span style="left:1637px;top:498.9px;font-size:17px;line-height:20.4px;font-weight:400;color:#d8d5d2;letter-spacing:-0.064px;">Debounce</span>
<span style="left:1637px;top:527.9px;font-size:17px;line-height:20.4px;font-weight:400;color:#d8d5d2;letter-spacing:0.024px;">Server-side Only</span>
<span style="left:1637px;top:555.9px;font-size:17px;line-height:20.4px;font-weight:400;color:#d8d5d2;letter-spacing:-0.202px;">Preserve Errors</span>
<span style="left:1637px;top:584.9px;font-size:17px;line-height:20.4px;font-weight:400;color:#d8d5d2;letter-spacing:-0.323px;">Success Callback</span>
<span style="left:1637px;top:612.9px;font-size:17px;line-height:20.4px;font-weight:400;color:#d8d5d2;letter-spacing:-0.181px;">Failure Callback</span>
<span style="left:1637px;top:641.9px;font-size:17px;line-height:20.4px;font-weight:400;color:#d8d5d2;letter-spacing:0.054px;">Override Display Location</span>
<span style="left:1449px;top:682.9px;font-size:17px;line-height:20.4px;font-weight:400;color:#ffffff;letter-spacing:-0.190px;">Request</span>
<span style="left:1614px;top:682.9px;font-size:17px;line-height:20.4px;font-weight:400;color:#ffffff;letter-spacing:-0.372px;">SUBMIT</span>
<span style="left:1449px;top:728.9px;font-size:17px;line-height:20.4px;font-weight:400;color:#ffffff;letter-spacing:-0.261px;">Success Callback</span>
<span style="left:1449px;top:850.9px;font-size:17px;line-height:20.4px;font-weight:400;color:#ffffff;letter-spacing:-0.118px;">Failure Callback</span>
<span style="left:1455px;top:765.7px;font-size:15.5px;line-height:18.6px;font-weight:400;color:#f4f2f0;font-family:'DejaVu Sans Mono', 'Liberation Mono', monospace;letter-spacing:0.077px;-webkit-text-stroke:0.55px currentColor;">apex.submit('SUBMIT');</span>
<span style="left:1455px;top:887.7px;font-size:15.5px;line-height:18.6px;font-weight:400;color:#f4f2f0;font-family:'DejaVu Sans Mono', 'Liberation Mono', monospace;letter-spacing:0.076px;-webkit-text-stroke:0.55px currentColor;">if ( confirm('The result is invalid. Are you sure</span>
<span style="left:1455px;top:907.7px;font-size:15.5px;line-height:18.6px;font-weight:400;color:#f4f2f0;font-family:'DejaVu Sans Mono', 'Liberation Mono', monospace;letter-spacing:0.075px;-webkit-text-stroke:0.55px currentColor;">you want to continue?') ) {</span>
<span style="left:1455px;top:927.7px;font-size:15.5px;line-height:18.6px;font-weight:400;color:#f4f2f0;font-family:'DejaVu Sans Mono', 'Liberation Mono', monospace;letter-spacing:0.073px;-webkit-text-stroke:0.55px currentColor;">  apex.item('P1_OVERWRITE').setValue('Y');</span>
<span style="left:1455px;top:947.7px;font-size:15.5px;line-height:18.6px;font-weight:400;color:#f4f2f0;font-family:'DejaVu Sans Mono', 'Liberation Mono', monospace;letter-spacing:0.043px;-webkit-text-stroke:0.55px currentColor;">  apex.submit('SUBMIT');</span>
<span style="left:1455px;top:967.7px;font-size:15.5px;line-height:18.6px;font-weight:400;color:#f4f2f0;font-family:'DejaVu Sans Mono', 'Liberation Mono', monospace;letter-spacing:-0.336px;-webkit-text-stroke:0.55px currentColor;">};</span>
<span style="left:1481px;top:1074.3px;font-size:20px;line-height:24.0px;font-weight:700;color:#ffffff;letter-spacing:-0.324px;">Affected Elements</span>
</div>
<div style="left:21px;top:21px;width:158px;height:79px;background:#ffffff;border-radius:11px;box-shadow:0 4px 14px rgba(60,40,120,0.09);"></div>
<svg style="left:46px;top:46px" width="46" height="30" viewBox="0 0 46 30"><rect x="3" y="3" width="39" height="24" rx="12" stroke="#c74634" stroke-width="4.6" fill="none"/></svg>
<span style="left:98px;top:49.1px;font-size:19.5px;line-height:23.4px;font-weight:700;color:#161513;font-family:-webkit-text-stroke:0.2px currentColor;;letter-spacing:0.227px;">APEX</span>
</div>
</body></html>
